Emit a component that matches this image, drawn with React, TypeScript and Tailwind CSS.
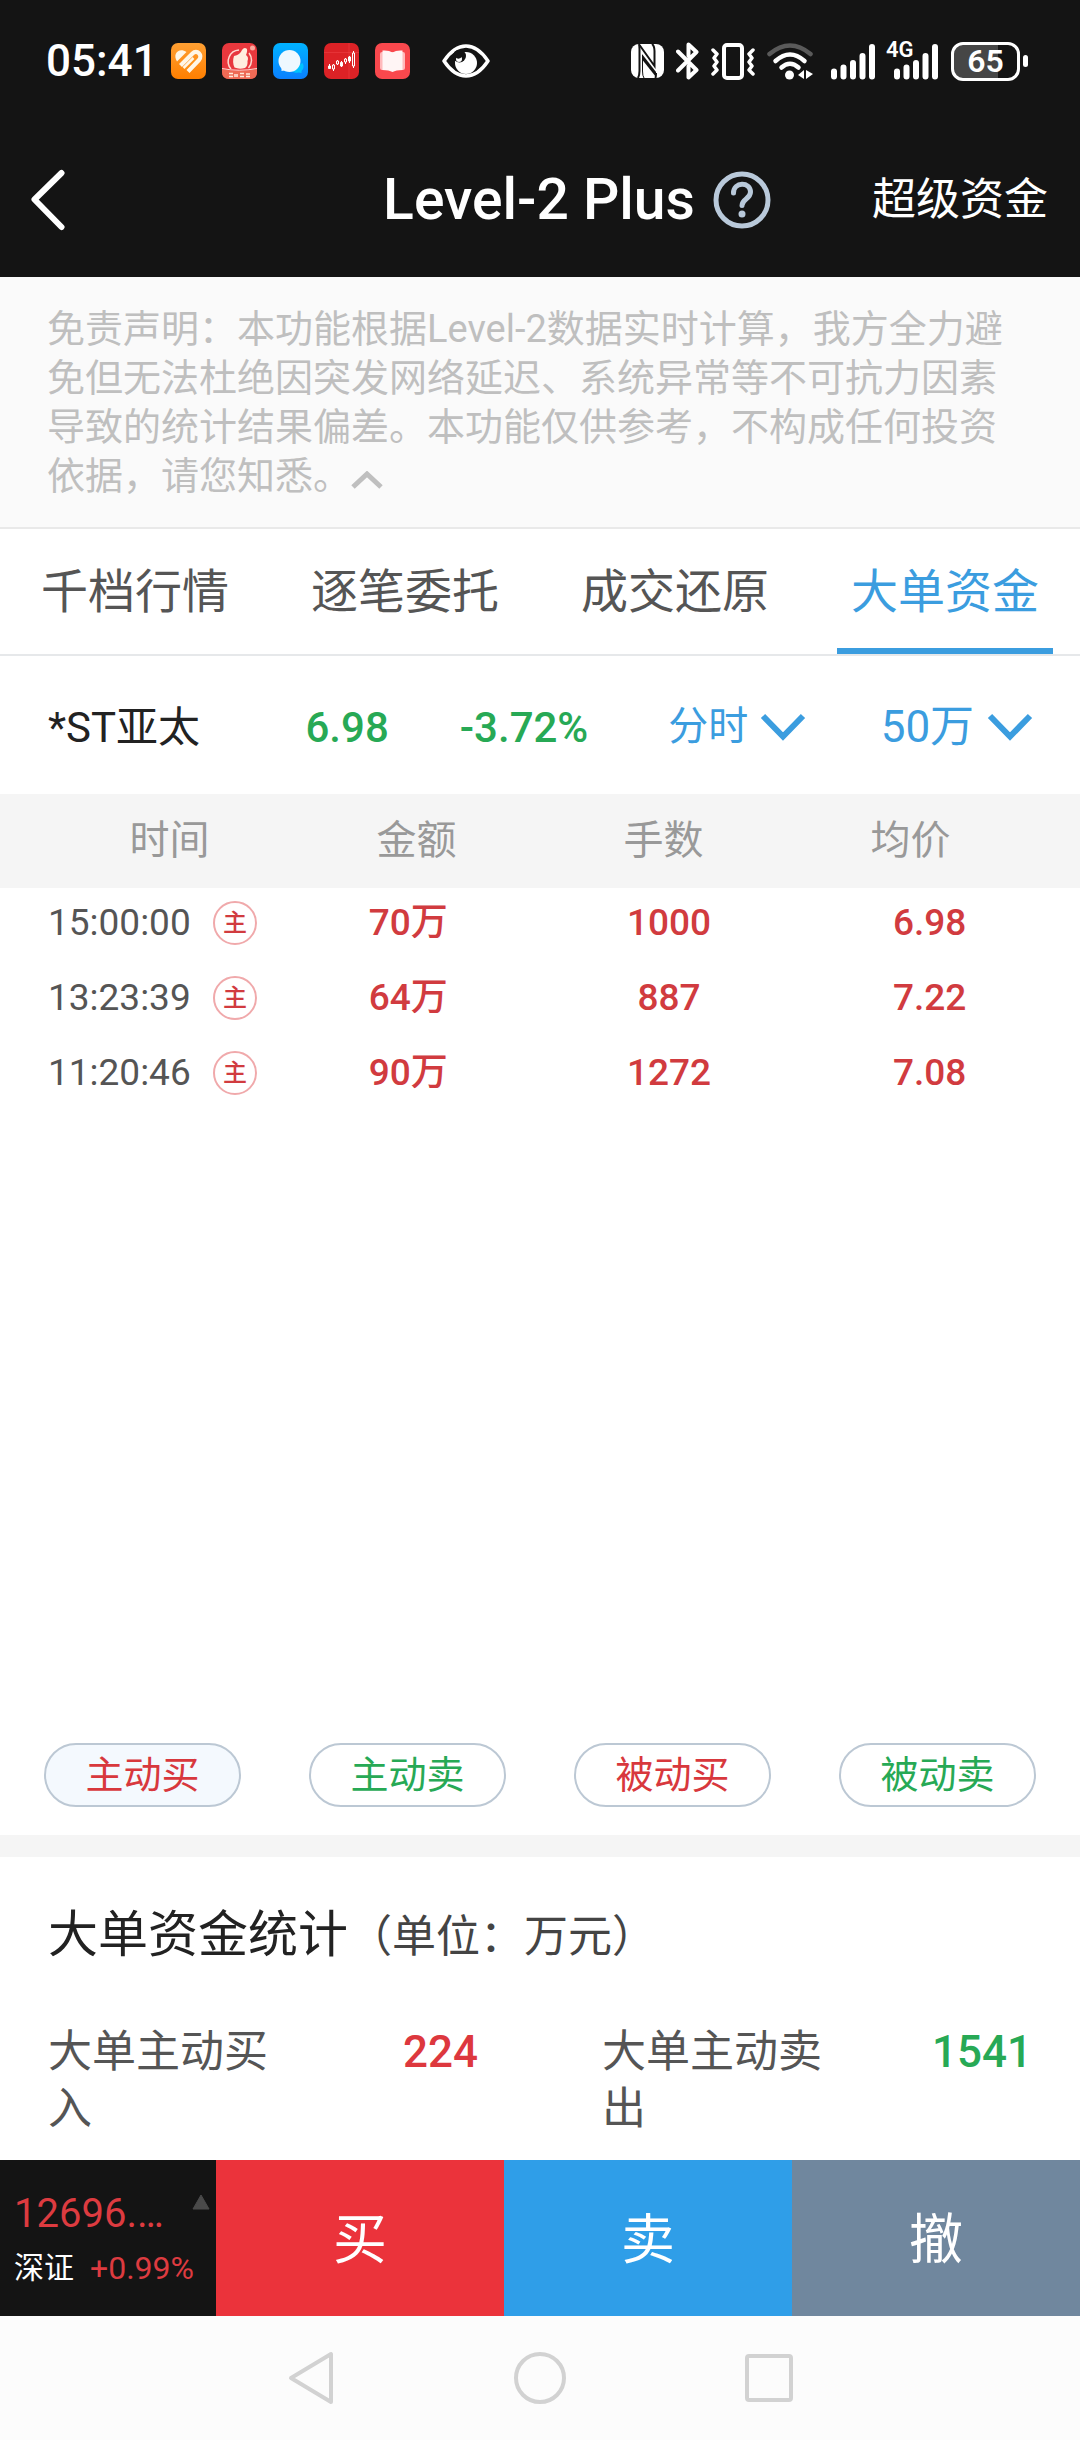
import type { ReactNode } from "react";
import { clsx } from "clsx";

interface Trade {
  time: string;
  amount: string;
  lots: string;
  price: string;
}

interface Filter {
  label: string;
  side: "buy" | "sell";
}

const tabs = ["千档行情", "逐笔委托", "成交还原", "大单资金"];
const columns = ["时间", "金额", "手数", "均价"];

const trades: Trade[] = [
  { time: "15:00:00", amount: "70万", lots: "1000", price: "6.98" },
  { time: "13:23:39", amount: "64万", lots: "887", price: "7.22" },
  { time: "11:20:46", amount: "90万", lots: "1272", price: "7.08" },
];

const filters: Filter[] = [
  { label: "主动买", side: "buy" },
  { label: "主动卖", side: "sell" },
  { label: "被动买", side: "buy" },
  { label: "被动卖", side: "sell" },
];

function AppIcons() {
  return (
    <div className="flex gap-4">
      {/* Health */}
      <svg className="w-[35px] h-9" viewBox="0 0 35 36">
        <defs>
          <linearGradient id="health" x1="0" y1="0" x2="0" y2="1">
            <stop offset="0" stopColor="#ffa033" />
            <stop offset="1" stopColor="#ff7f00" />
          </linearGradient>
        </defs>
        <rect width="35" height="36" rx="7" fill="url(#health)" />
        <path d="M6 18.500 C1 11 8 4 15.500 9 Z" fill="#fff6e6" />
        <g stroke="#fff6e6" strokeWidth="4.200" fill="none">
          <path d="M9.500 22.500 L21.500 10.500 C26 6 32 12 28 17 L17 28.500" strokeLinejoin="round" />
          <path d="M13.500 26 L24 15.500" strokeWidth="2.200" stroke="#ff9319" />
          <path d="M12.500 25 L22.500 15" strokeWidth="2.500" />
        </g>
      </svg>
      {/* Thumb */}
      <svg className="w-[35px] h-9" viewBox="0 0 35 36">
        <rect width="35" height="36" rx="7" fill="#e8383d" />
        <path d="M0 26 Q17 30 35 26 V29 Q35 36 28 36 H7 Q0 36 0 29 Z" fill="#ee6a55" />
        <path d="M0 25.500 Q17 29 35 25.500" fill="none" stroke="#ffd9cf" strokeWidth="1" />
        <path d="M9 26 A11.500 11.500 0 0 1 17 7 M27 10 A11.500 11.500 0 0 1 26.500 25" fill="none" stroke="#ffd9cf" strokeWidth="1.500" />
        <path d="M12 13 Q18 12 20 7 Q22 4 24.500 5.500 Q26 7 24 12 Q27 14 25.500 18 Q26 23 23 25 Q17 26.500 12.500 24.500 Q10 19 12 13 Z" fill="#ffeede" />
        <path d="M7 30.500 H11 M7 33.500 H11 M13 31 V34 M15 31 V34 M18 30.500 H22 M18 33.500 H22 M24 31 H28 M24 33.500 H28" stroke="#ffe9dc" strokeWidth="1.500" />
        <circle cx="30.500" cy="5" r="2.500" fill="#f9a99d" />
      </svg>
      {/* Messages */}
      <svg className="w-[35px] h-9" viewBox="0 0 35 36">
        <defs>
          <linearGradient id="message" x1="0" y1="0" x2="0" y2="1">
            <stop offset="0" stopColor="#00b2ff" />
            <stop offset="1" stopColor="#0a80ff" />
          </linearGradient>
        </defs>
        <rect width="35" height="36" rx="7" fill="url(#message)" />
        <path d="M29.500 20 A6 6 0 0 1 28.500 28 V30 L25.500 29.500 A6 6 0 0 1 18 26 Z" fill="#00c3ff" />
        <circle cx="16.500" cy="18" r="11" fill="#eef8ff" />
        <path d="M8.500 22 V28 L14 27 Z" fill="#eef8ff" />
      </svg>
      {/* Candles */}
      <svg className="w-[35px] h-9" viewBox="0 0 35 36">
        <rect width="35" height="36" rx="7" fill="#dc2226" />
        <path d="M0 9.500 H35 M25 0 V36" stroke="#f04448" strokeWidth="0.500" />
        <g fill="none" stroke="#fff" strokeWidth="1">
          <path d="M5.500 21 V26 M9.500 21 V28 M13.500 17 V22 M17.500 18 V24 M21.500 15 V21 M25.500 13 V20 M29.500 8 V25" />
          <path d="M4.500 23 H6.500 V25.500 H4.500 Z M16.500 19.500 H18.500 V23 H16.500 Z M24.500 14 H26.500 V18 H24.500 Z" fill="#fff" />
          <path d="M8.500 22 H10.500 V26 H8.500 Z M12.500 18 H14.500 V21 H12.500 Z M20.500 16 H22.500 V19 H20.500 Z M28.500 10 H30.500 V23 H28.500 Z" fill="#dc2226" />
        </g>
      </svg>
      {/* Reader */}
      <svg className="w-[35px] h-9" viewBox="0 0 35 36">
        <rect width="35" height="36" rx="7" fill="#f9484d" />
        <path d="M5 11 Q5 9 7 9 H28 Q30 9 30 11 V25 Q30 27 28 27 H7 Q5 27 5 25 Z" fill="#ffb9bb" />
        <path d="M7.500 7.500 Q14 7 17.500 9.500 Q21 7 27.500 7.500 V27 Q21 27 17.500 29 Q14 27 7.500 27 Z" fill="#fff5f5" />
      </svg>
    </div>
  );
}

function EyeIcon() {
  return (
    <svg className="ml-8 w-12 h-[34px]" viewBox="0 0 48 34">
      <path d="M2 17 Q12 2 24 2 Q36 2 46 17 Q36 32 24 32 Q12 32 2 17 Z" fill="none" stroke="#fff" strokeWidth="3.500" strokeLinejoin="round" />
      <circle cx="24" cy="19" r="11" fill="#fff" />
      <circle cx="17.500" cy="12" r="6.500" fill="#141414" />
      <circle cx="17" cy="15" r="3" fill="#fff" />
      <path d="M13 13 Q17 17 20.500 12 L17 7 Z" fill="#141414" />
    </svg>
  );
}

function SignalBars() {
  return (
    <svg className="w-[45px] h-[37px]" viewBox="0 0 45 37" stroke="#fff" strokeWidth="6" strokeLinecap="round">
      <path d="M3 28.500 V33.500 M12.500 24.500 V33.500 M22 20 V33.500 M31.500 13 V33.500 M41 4 V33.500" />
    </svg>
  );
}

function StatusBar() {
  return (
    <div className="flex h-[122px] items-center justify-between pl-[46px] pr-[52px]">
      <div className="flex items-center">
        <span className="mr-3 w-[113px] text-[44px] font-medium">05:41</span>
        <AppIcons />
        <EyeIcon />
      </div>
      <div className="flex items-center gap-3">
        {/* NFC */}
        <svg className="w-[33px] h-9" viewBox="0 0 33 36">
          <rect y="1" width="33" height="34" rx="8" fill="#fff" />
          <g fill="none" stroke="#141414" strokeWidth="2">
            <path d="M8 1 Q8.500 3 8.500 6 V28 Q8.500 32 7 35" />
            <path d="M8.500 2 L23.500 23 V8 Q23.500 3 21 1" />
            <path d="M24.500 35 Q25 33 25 30" />
            <path d="M11.500 12 V28 Q11.500 33 13 35" strokeWidth="1" />
          </g>
          <path d="M11 11 L25 29 V34 L11.500 17 Z" fill="#141414" />
        </svg>
        {/* Bluetooth */}
        <svg className="w-[23px] h-[38px]" viewBox="0 0 23 38" fill="none" stroke="#fff" strokeWidth="4" strokeLinecap="round" strokeLinejoin="round">
          <path d="M2 9.500 L20.500 28 L12.500 35.500 V24 M12.500 14 V2.500 L20.500 10 L2 28.500" />
        </svg>
        {/* Vibrate */}
        <svg className="w-11 h-[37px]" viewBox="0 0 44 37" fill="none" stroke="#fff" strokeLinecap="round" strokeLinejoin="round">
          <rect x="13" y="2" width="18" height="33" rx="3" strokeWidth="4" />
          <path d="M2 7 L6 11 L3 15 L6 19 L3 23 L6 27 L2 31 M42 7 L38 11 L41 15 L38 19 L41 23 L38 27 L42 31" strokeWidth="3.500" />
        </svg>
        {/* Wi-Fi */}
        <svg className="w-[46px] h-[37px]" viewBox="0 0 46 37" fill="none" stroke="#fff" strokeWidth="4.500" strokeLinecap="round">
          <path d="M2.500 11 Q23 -6 43.500 11" stroke="#5a5a5a" />
          <path d="M8.500 18 Q23 5 37.500 18" />
          <path d="M14.500 24.500 Q23 17 31.500 24.500" />
          <circle cx="22.500" cy="32" r="4.500" fill="#fff" stroke="none" />
          <path d="M37 27 V36 L31 32 Z M39 27 V36 L46 31 Z" fill="#fff" stroke="none" />
        </svg>
        <div className="ml-1.5">
          <SignalBars />
        </div>
        <div className="relative pl-1.5">
          <SignalBars />
          <span className="absolute -left-1.5 -top-1 px-1 text-[22px]/[22px] font-semibold">4G</span>
        </div>
        {/* Battery */}
        <div className="flex items-center gap-[3px]">
          <div className="flex h-[39px] w-[69px] items-center justify-center rounded-xl border-3 border-white bg-linear-to-r from-[#464646] from-70% to-[#141414] to-70% text-[32px]/8 font-semibold">
            65
          </div>
          <div className="h-3 w-[5px] rounded-sm bg-white" />
        </div>
      </div>
    </div>
  );
}

function TitleBar() {
  return (
    <header className="grid h-[155px] grid-cols-[1fr_auto_1fr] items-center pl-[30px] pr-8">
      <button type="button" aria-label="返回" className="justify-self-start">
        <svg className="w-9 h-[62px]" viewBox="0 0 36 62" fill="none" stroke="#fff" strokeWidth="6" strokeLinecap="round" strokeLinejoin="round">
          <path d="M31.500 4 L4.500 30.500 L31.500 58" />
        </svg>
      </button>
      <h1 className="text-[57px] font-medium">Level-2 Plus</h1>
      <div className="flex items-center justify-between pl-[18px]">
        <button type="button" aria-label="帮助">
          <svg className="w-[58px] h-[58px]" viewBox="0 0 58 58" fill="none" stroke="#b9c9da" strokeLinecap="round">
            <circle cx="29" cy="29" r="26" strokeWidth="5" />
            <path d="M20.500 22 C20.500 10.500 37.500 10.500 37.500 21 C37.500 28 29 28 29 34.500" strokeWidth="5" />
            <circle cx="29" cy="43" r="3.500" fill="#b9c9da" stroke="none" />
          </svg>
        </button>
        <a href="#super" className="text-[44px]">超级资金</a>
      </div>
    </header>
  );
}

function DropDown({ label, value, className }: { label: string; value: string; className: string }) {
  return (
    <label className="flex items-center gap-3 text-[#3b9ddf]">
      <select aria-label={label} className={clsx("appearance-none bg-transparent outline-none", className)}>
        <option>{value}</option>
      </select>
      <svg className="w-[46px] h-7" viewBox="0 0 46 28" fill="none" stroke="currentColor" strokeWidth="6">
        <path d="M3 3 L23 23.500 L43 3" />
      </svg>
    </label>
  );
}

function Stat({ label, value, className }: { label: string; value: string; className: string }) {
  return (
    <div className="flex items-start justify-between">
      <dt className="w-[226px] text-[44px]/[57px] text-[#555]">{label}</dt>
      <dd className={clsx("text-[44px]/[57px] font-medium", className)}>{value}</dd>
    </div>
  );
}

function TradeButton({ className, children }: { className: string; children: ReactNode }) {
  return (
    <button type="button" className={clsx("flex-1 pt-1 text-[54px] text-white", className)}>
      {children}
    </button>
  );
}

export default function App() {
  return (
    <div className="flex min-h-screen flex-col bg-white font-['Roboto','Noto_Sans_CJK_SC',sans-serif]">
      <div className="bg-[#141414] text-white">
        <StatusBar />
        <TitleBar />
      </div>

      <p className="border-b-2 border-[#e9e9e9] bg-[#fafafa] pb-[26px] pl-[47px] pr-14 pt-7 text-[38px]/[49px] text-[#bfbfbf]">
        免责声明：本功能根据Level-2数据实时计算，我方全力避免但无法杜绝因突发网络延迟、系统异常等不可抗力因素导致的统计结果偏差。本功能仅供参考，不构成任何投资依据，请您知悉。
        <button type="button" aria-label="收起">
          <svg className="w-8 h-[18px]" viewBox="0 0 32 18" fill="none" stroke="currentColor" strokeWidth="5">
            <path d="M2 16 L16 3 L30 16" />
          </svg>
        </button>
      </p>

      <nav className="flex h-[127px] border-b-2 border-[#e6e8ea]">
        {tabs.map((tab) => {
          const active = tab === "大单资金";
          return (
            <button
              key={tab}
              type="button"
              className={clsx(
                "mx-[27px] flex-1 border-b-6 pt-2 text-[47px]",
                active ? "border-[#3b9ddf] text-[#3b9ddf]" : "border-transparent text-[#555]"
              )}
            >
              {tab}
            </button>
          );
        })}
      </nav>

      <section className="grid h-[138px] grid-cols-[257fr_154fr_208fr_212fr_167fr] items-center pl-12 pr-8 pt-1 text-[42px] font-medium">
        <span className="font-normal text-[#222]">*ST亚太</span>
        <span className="text-[#27a955]">6.98</span>
        <span className="text-[#27a955]">-3.72%</span>
        <DropDown label="周期" value="分时" className="text-[40px] font-normal" />
        <DropDown label="金额" value="50万" className="text-[44px] font-normal" />
      </section>

      <table className="block flex-1">
        <thead className="block bg-[#f5f5f5]">
          <tr className="grid h-[94px] grid-cols-4 items-center px-[46px] text-[40px] text-[#999]">
            {columns.map((column) => (
              <th key={column} className="font-normal">{column}</th>
            ))}
          </tr>
        </thead>
        <tbody className="block">
          {trades.map((trade) => (
            <tr
              key={trade.time}
              className="grid h-[75px] grid-cols-[230px_1fr_1fr_1fr] items-center pb-1.5 pl-12 pr-5 text-center text-[37px] font-medium text-[#d13b3f]"
            >
              <td className="flex items-center gap-5 font-normal">
                <span className="w-[145px] text-left text-[#555]">{trade.time}</span>
                <span className="flex size-11 items-center justify-center rounded-full border-2 border-[#f0a9ab] text-[24px] font-medium">
                  主
                </span>
              </td>
              <td>{trade.amount}</td>
              <td>{trade.lots}</td>
              <td>{trade.price}</td>
            </tr>
          ))}
        </tbody>
      </table>

      <div className="flex justify-between px-11 pb-7">
        {filters.map((filter, index) => (
          <button
            key={filter.label}
            type="button"
            className={clsx(
              "h-16 w-[197px] rounded-full border-2 border-[#bcc8d4] text-[38px]",
              index === 0 && "bg-[#f4f9fe]",
              filter.side === "buy" ? "text-[#d8383d]" : "text-[#27a955]"
            )}
          >
            {filter.label}
          </button>
        ))}
      </div>

      <section className="border-t-22 border-[#f5f5f5] px-12 pb-[22px] pt-[42px]">
        <h2 className="text-[50px]/[72px] text-[#222]">
          大单资金统计<span className="text-[44px] text-[#444]">（单位：万元）</span>
        </h2>
        <dl className="mt-[51px] grid grid-cols-2 gap-x-31">
          <Stat label="大单主动买入" value="224" className="text-[#dd383e]" />
          <Stat label="大单主动卖出" value="1541" className="text-[#27a955]" />
        </dl>
      </section>

      <footer>
        <div className="flex h-[156px]">
          <div className="flex w-1/5 flex-col justify-center gap-2 bg-[#141414] pl-[14px] pr-1.5 pt-1 text-[#dd3b40]">
            <div className="flex items-start justify-between">
              <span className="text-[40px]/[48px]">12696.…</span>
              <svg className="mt-1 w-[18px] h-4" viewBox="0 0 18 16">
                <path d="M9 1 L17 15 H1 Z" fill="#4a4a4a" stroke="#4a4a4a" strokeLinejoin="round" />
              </svg>
            </div>
            <div className="flex gap-4 text-[30px]/[44px]">
              <span className="text-white">深证</span>
              <span className="text-[32px]">+0.99%</span>
            </div>
          </div>
          <TradeButton className="bg-[#eb333b]">买</TradeButton>
          <TradeButton className="bg-[#2f9ee8]">卖</TradeButton>
          <TradeButton className="bg-[#70879e]">撤</TradeButton>
        </div>
        <div className="flex h-[124px] items-center justify-center gap-[179px] bg-[#fcfcfc] text-[#d2d2d2]">
          <button type="button" aria-label="后退">
            <svg className="w-12 h-[54px]" viewBox="0 0 48 54" fill="none" stroke="currentColor" strokeWidth="4" strokeLinejoin="round">
              <path d="M44 3 V51 L4 27 Z" />
            </svg>
          </button>
          <button type="button" aria-label="主页" className="size-[52px] rounded-full border-4" />
          <button type="button" aria-label="最近任务" className="size-12 rounded-sm border-4" />
        </div>
      </footer>
    </div>
  );
}
